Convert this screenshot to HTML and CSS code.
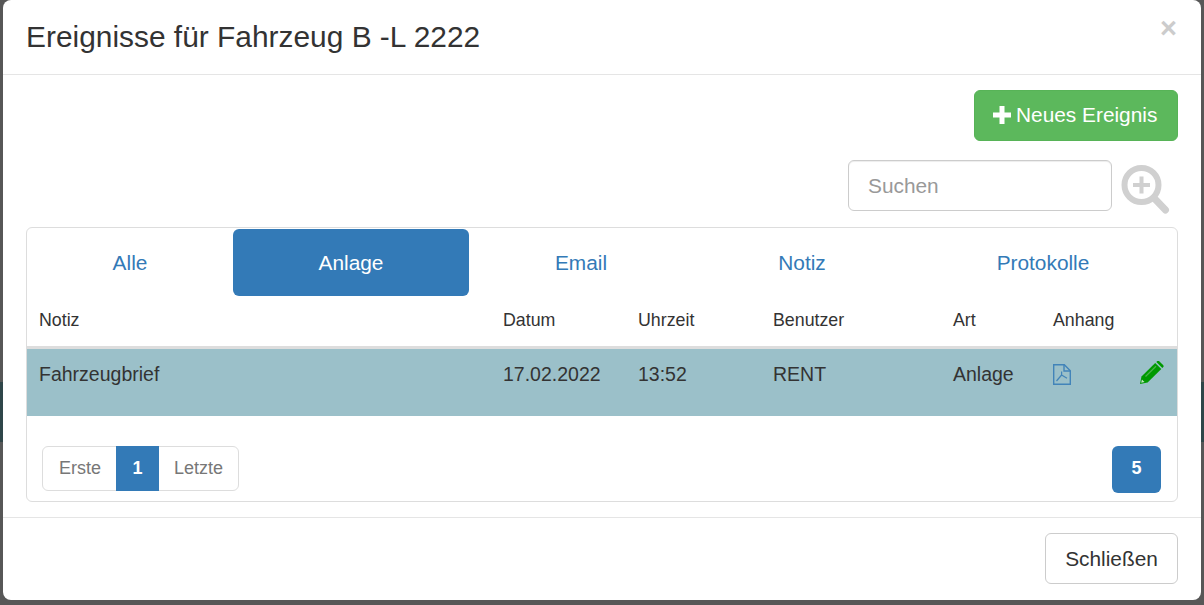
FILE: index.html
```html
<!DOCTYPE html>
<html>
<head>
    <title>Ereignisse</title>
    <link rel="stylesheet" href="styles.css">
</head>
<body>
    <div class="modal">
        <div class="modal-header">
            <h4>Ereignisse für Fahrzeug B -L 2222</h4>
            <span class="close">&times;</span>
        </div>
        <div class="modal-body">
            <div class="action-row">
                <button class="btn btn-new">
                    <svg class="icon-plus" viewBox="0 0 18 18"><path d="M6.5 0h5v6.5H18v5h-6.5V18h-5v-6.5H0v-5h6.5z"/></svg>
                    Neues Ereignis
                </button>
            </div>
            <div class="search-row">
                <input type="text" class="search" placeholder="Suchen">
                <svg class="icon-search" viewBox="0 0 50 52">
                    <circle cx="20.5" cy="22" r="17" />
                    <path class="plus" d="M20.5 13.5v17M12 22h17" />
                    <path class="handle" d="M33 35l11.5 12" />
                </svg>
            </div>
            <div class="panel">
                <div class="tabs">
                    <a>Alle</a>
                    <a class="active">Anlage</a>
                    <a>Email</a>
                    <a>Notiz</a>
                    <a>Protokolle</a>
                </div>
                <table>
                    <colgroup>
                        <col class="col-note">
                        <col class="col-date">
                        <col class="col-time">
                        <col class="col-user">
                        <col class="col-type">
                        <col class="col-file">
                    </colgroup>
                    <thead>
                        <tr>
                            <th>Notiz</th>
                            <th>Datum</th>
                            <th>Uhrzeit</th>
                            <th>Benutzer</th>
                            <th>Art</th>
                            <th>Anhang</th>
                        </tr>
                    </thead>
                    <tbody>
                        <tr>
                            <td>Fahrzeugbrief</td>
                            <td>17.02.2022</td>
                            <td>13:52</td>
                            <td>RENT</td>
                            <td>Anlage</td>
                            <td>
                                <div class="file-cell">
                                    <svg class="icon-pdf" viewBox="0 0 18 21">
                                        <path class="page" d="M.7.7h10.6l6 6v13.6H.7z" />
                                        <path class="page" d="M11 .7v6.3h6.3" />
                                        <path class="mark" d="M8.6 7.500v3.500M8.600 11L3.500 17M8.600 11l5.400 3.200" />
                                    </svg>
                                    <svg class="icon-pencil" viewBox="0 0 24 23">
                                        <path d="M0 23l1.500-7.500L15.200 2l6.100 6.100L7.600 21.500z" />
                                        <path d="M16.300 1l1-1c.5-.3 1.200-.3 1.700 0l4.300 4.300c.4.500.4 1.200 0 1.700l-1 1.100z" />
                                        <path class="shine" d="M5.500 15.500L16 5.200" />
                                        <path class="tip" d="M1.900 18.500l2.600 2.600-3.300.7z" />
                                    </svg>
                                </div>
                            </td>
                        </tr>
                    </tbody>
                </table>
                <div class="pager-row">
                    <div class="pager">
                        <a>Erste</a>
                        <a class="current">1</a>
                        <a>Letzte</a>
                    </div>
                    <span class="page-size">5</span>
                </div>
            </div>
        </div>
        <div class="modal-footer">
            <button class="btn btn-close">Schließen</button>
        </div>
    </div>
</body>
</html>
```

FILE: styles.css
```css
* {
    box-sizing: border-box;
}

html, body {
    height: 100%;
}

body {
    margin: 0;
    padding: 0 3px 5px;
    overflow: hidden;
    font-family: "Liberation Sans", Arial, sans-serif;
    color: #333;
    background: linear-gradient(#575757 382px, #2f4649 382px, #2f4649 442px, #575757 442px);
}

.modal {
    height: 600px;
    background-color: #fff;
    border-radius: 8px;
}

.modal-header {
    display: flex;
    justify-content: space-between;
    height: 75px;
    padding: 15px 24px 0 23px;
    border-bottom: 1px solid #e5e5e5;
}

.modal-header h4 {
    margin: 0;
    font-size: 29.900px;
    font-weight: normal;
    line-height: 44px;
}

.close {
    font-size: 29px;
    font-weight: bold;
    line-height: 26px;
    color: #ccc;
}

.modal-body {
    padding: 15px 23px;
}

.action-row {
    display: flex;
    justify-content: flex-end;
}

.btn {
    height: 51px;
    font-family: inherit;
    font-size: 20.850px;
    border-radius: 6px;
    cursor: pointer;
}

.btn-new {
    display: flex;
    align-items: center;
    gap: 5px;
    width: 204px;
    padding: 0 0 2px 18px;
    color: #fff;
    background-color: #5cb85c;
    border: 1px solid #57b357;
}

.icon-plus {
    width: 18px;
    height: 18px;
    fill: #fff;
}

.search-row {
    display: flex;
    justify-content: flex-end;
    height: 51px;
    margin-top: 19px;
}

.search {
    width: 264px;
    height: 51px;
    padding: 0 19px;
    font-family: inherit;
    font-size: 20.850px;
    border: 1px solid #ccc;
    border-radius: 6px;
    box-shadow: inset 0 1px 1px rgba(0, 0, 0, 0.075);
}

.search::placeholder {
    color: #999;
}

.icon-search {
    width: 50px;
    height: 52px;
    margin: 3px 7px 0 9px;
    fill: none;
    stroke: #d0d0d0;
}

.icon-search circle {
    stroke-width: 6;
}

.icon-search .plus {
    stroke-width: 4;
}

.icon-search .handle {
    stroke-width: 7;
    stroke-linecap: round;
}

.panel {
    height: 275px;
    margin-top: 16px;
    padding-top: 1px;
    border: 1px solid #ddd;
    border-radius: 6px;
}

.tabs {
    display: grid;
    grid-template-columns: 206px 236px 224px 218px 264px;
    height: 67px;
}

.tabs a {
    display: flex;
    align-items: center;
    justify-content: center;
    font-size: 20.850px;
    color: #337ab7;
    border-radius: 6px;
}

.tabs a.active {
    color: #fff;
    background-color: #337ab7;
}

table {
    width: 100%;
    table-layout: fixed;
    border-collapse: separate;
    border-spacing: 0;
}

.col-note { width: 464px; }
.col-date { width: 135px; }
.col-time { width: 135px; }
.col-user { width: 180px; }
.col-type { width: 100px; }

th {
    height: 53px;
    padding: 0 12px 1px;
    font-size: 17.800px;
    font-weight: normal;
    text-align: left;
    border-bottom: 3px solid #ddd;
}

td {
    height: 67px;
    padding: 12px 12px 0;
    font-size: 19.500px;
    line-height: 26px;
    vertical-align: top;
    background-color: #9bc0c9;
}

.file-cell {
    display: flex;
    justify-content: space-between;
    padding-right: 1px;
}

.icon-pdf {
    width: 18px;
    height: 21px;
    margin-top: 3px;
    fill: none;
    stroke: #337ab7;
    opacity: 0.85;
}

.icon-pdf .page {
    stroke-width: 1.400;
}

.icon-pdf .mark {
    stroke-width: 1.200;
}

.icon-pencil {
    width: 24px;
    height: 23px;
    fill: #090;
}

.icon-pencil .shine {
    fill: none;
    stroke: #4cb24c;
    stroke-width: 1.200;
}

.icon-pencil .tip {
    fill: #c6e5c6;
}

.pager-row {
    display: flex;
    justify-content: space-between;
    align-items: flex-start;
    margin-top: 30px;
    padding: 0 16px 0 15px;
}

.pager {
    display: flex;
    height: 45px;
    font-size: 18px;
    color: #777;
    border: 1px solid #ddd;
    border-radius: 6px;
}

.pager a {
    display: flex;
    align-items: center;
    padding: 0 15px 0 16px;
}

.pager a:last-child {
    padding: 0 15px;
}

.pager a.current {
    margin: -1px 0;
    padding: 0 16.500px;
    font-weight: bold;
    color: #fff;
    background-color: #337ab7;
}

.page-size {
    display: flex;
    align-items: center;
    justify-content: center;
    width: 49px;
    height: 47px;
    padding-bottom: 2px;
    font-size: 18px;
    font-weight: bold;
    color: #fff;
    background-color: #337ab7;
    border-radius: 6px;
}

.modal-footer {
    display: flex;
    justify-content: flex-end;
    padding: 15px 23px;
    border-top: 1px solid #e5e5e5;
}

.btn-close {
    width: 133px;
    padding: 0;
    color: #333;
    background-color: #fff;
    border: 1px solid #ccc;
}
```
